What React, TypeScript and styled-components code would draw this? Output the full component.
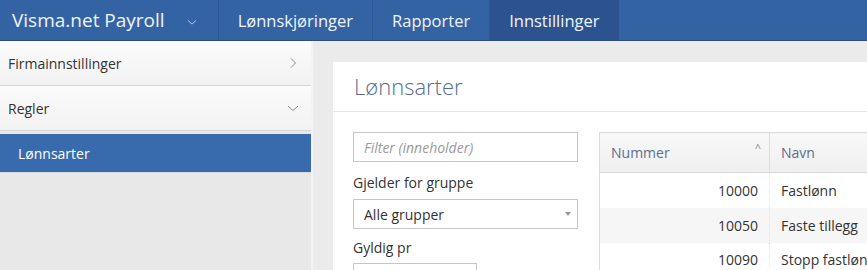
import React from 'react';
import styled, { createGlobalStyle } from 'styled-components';

const GlobalStyle = createGlobalStyle`
  html, body {
    margin: 0;
    padding: 0;
    overflow: hidden;
    background: #ebebeb;
    font-family: 'Open Sans', 'Noto Sans', Arial, sans-serif;
  }
  * { box-sizing: border-box; }
`;

const tabs = [
  { label: 'Lønnskjøringer' },
  { label: 'Rapporter' },
  { label: 'Innstillinger', active: true },
];

const rows = [
  { nr: '10000', name: 'Fastlønn' },
  { nr: '10050', name: 'Faste tillegg' },
  { nr: '10090', name: 'Stopp fastlønn' },
];

const Chevron: React.FC<{ dir: 'right' | 'down'; color?: string; size?: number }> = ({ dir, color = '#8a8a8a', size = 12 }) => (
  <svg width={size} height={size} viewBox="0 0 12 12" fill="none">
    {dir === 'right' ? (
      <path d="M4 1.5 L8.5 6 L4 10.5" stroke={color} strokeWidth="1" />
    ) : (
      <path d="M1 4 L6 8.5 L11 4" stroke={color} strokeWidth="1" />
    )}
  </svg>
);

const App: React.FC = () => {
  return (
    <>
      <GlobalStyle />
      <Page>
        <TopBar>
          <Brand>
            Visma.net Payroll
            <BrandCaret>
              <Chevron dir="down" color="#c9d8ee" size={10} />
            </BrandCaret>
          </Brand>
          {tabs.map((t) => (
            <Tab key={t.label} $active={t.active}>{t.label}</Tab>
          ))}
        </TopBar>
        <Body>
          <Sidebar>
            <SideItem>
              Firmainnstillinger
              <Chevron dir="right" />
            </SideItem>
            <SideItem>
              Regler
              <Chevron dir="down" />
            </SideItem>
            <SubItem $active>Lønnsarter</SubItem>
          </Sidebar>
          <Main>
            <Card>
              <CardTitle>Lønnsarter</CardTitle>
              <CardBody>
                <FilterColumn>
                  <TextInput placeholder="Filter (inneholder)" />
                  <Label>Gjelder for gruppe</Label>
                  <Select>
                    Alle grupper
                    <SelectCaret />
                  </Select>
                  <Label $tight>Gyldig pr</Label>
                  <DateInput />
                </FilterColumn>
                <Table>
                  <thead>
                    <tr>
                      <Th $width={170}>
                        Nummer
                        <SortCaret>^</SortCaret>
                      </Th>
                      <Th>Navn</Th>
                    </tr>
                  </thead>
                  <tbody>
                    {rows.map((r, i) => (
                      <Tr key={r.nr} $striped={i % 2 === 1}>
                        <NumCell>{r.nr}</NumCell>
                        <Td>{r.name}</Td>
                      </Tr>
                    ))}
                  </tbody>
                </Table>
              </CardBody>
            </Card>
          </Main>
        </Body>
      </Page>
    </>
  );
};

const Page = styled.div`
  display: flex;
  flex-direction: column;
  height: 270px;
  width: 867px;
  overflow: hidden;
`;

const TopBar = styled.div`
  display: flex;
  height: 41px;
  flex-shrink: 0;
  background: #3463a4;
  border-bottom: 1px solid #284f86;
  color: #fff;
`;

const Brand = styled.div`
  display: flex;
  align-items: center;
  padding: 0 21px 0 12px;
  font-size: 19px;
  color: #eef3fa;
`;

const BrandCaret = styled.span`
  display: flex;
  margin-left: 22px;
  margin-top: 3px;
`;

const Tab = styled.div<{ $active?: boolean }>`
  display: flex;
  align-items: center;
  padding: 0 19px;
  font-size: 16.5px;
  color: #eef3fa;
  border-left: 1px solid #2d5895;
  background: ${(p) => (p.$active ? '#2c5390' : 'transparent')};
`;

const Body = styled.div`
  display: flex;
  flex: 1;
  min-height: 0;
`;

const Sidebar = styled.div`
  width: 313px;
  flex-shrink: 0;
  background: #e8e8e8;
  border-right: 2px solid #f3f3f3;
  display: flex;
  flex-direction: column;
`;

const SideItem = styled.div`
  display: flex;
  align-items: center;
  justify-content: space-between;
  height: 45px;
  flex-shrink: 0;
  padding: 0 12px 0 8px;
  font-size: 14px;
  color: #333;
  background: linear-gradient(#fbfbfb, #f2f2f2);
  border-bottom: 1px solid #d6d6d6;
`;

const SubItem = styled.div<{ $active?: boolean }>`
  display: flex;
  align-items: center;
  height: 39px;
  flex-shrink: 0;
  margin-top: 3px;
  padding-left: 18px;
  font-size: 14px;
  color: ${(p) => (p.$active ? '#fff' : '#333')};
  background: ${(p) => (p.$active ? '#386bae' : 'transparent')};
  border-bottom: 1px solid #d9d9d9;
`;

const Main = styled.div`
  flex: 1;
  display: flex;
  padding: 21px 0 0 20px;
  min-width: 0;
`;

const Card = styled.div`
  flex: 1;
  background: #fff;
  display: flex;
  flex-direction: column;
  min-width: 0;
`;

const CardTitle = styled.div`
  height: 50px;
  flex-shrink: 0;
  display: flex;
  align-items: center;
  padding: 0 21px 2px;
  font-size: 22px;
  font-weight: 300;
  color: #566e8e;
  border-bottom: 1px solid #e4e4e4;
`;

const CardBody = styled.div`
  display: flex;
  gap: 21px;
  padding: 20px 0 0 20px;
  align-items: flex-start;
  flex-shrink: 0;
`;

const FilterColumn = styled.div`
  width: 225px;
  flex-shrink: 0;
  display: flex;
  flex-direction: column;
`;

const TextInput = styled.input`
  height: 30px;
  width: 225px;
  border: 1px solid #c6c6c6;
  padding: 0 10px;
  font-family: inherit;
  font-size: 14px;
  outline: none;
  &::placeholder {
    color: #9a9a9a;
    font-style: italic;
  }
`;

const Label = styled.div<{ $tight?: boolean }>`
  font-size: 14px;
  color: #333;
  margin: ${(p) => (p.$tight ? '9px 0 5px' : '11px 0 6px')};
  line-height: 20px;
`;

const Select = styled.div`
  position: relative;
  height: 30px;
  border: 1px solid #c6c6c6;
  display: flex;
  align-items: center;
  padding: 0 10px;
  font-size: 14px;
  color: #333;
`;

const SelectCaret = styled.span`
  position: absolute;
  right: 6px;
  top: 12px;
  width: 0;
  height: 0;
  border-left: 3.5px solid transparent;
  border-right: 3.5px solid transparent;
  border-top: 4px solid #999;
`;

const DateInput = styled.div`
  height: 30px;
  width: 124px;
  border: 1px solid #c6c6c6;
`;

const Table = styled.table`
  width: 600px;
  flex-shrink: 0;
  border-collapse: collapse;
  border: 1px solid #dcdcdc;
  font-size: 14px;
`;

const Th = styled.th<{ $width?: number }>`
  position: relative;
  width: ${(p) => (p.$width ? `${p.$width}px` : 'auto')};
  height: 40px;
  padding: 0 11px;
  text-align: left;
  font-weight: 400;
  color: #5b6f8e;
  background: linear-gradient(#f8f8f8, #efefef);
  border-bottom: 1px solid #d8d8d8;
  border-right: 1px solid #dcdcdc;
`;

const SortCaret = styled.span`
  position: absolute;
  right: 8px;
  top: 7px;
  font-size: 11px;
  color: #888;
`;

const Tr = styled.tr<{ $striped?: boolean }>`
  height: 35px;
  background: ${(p) => (p.$striped ? '#f6f6f6' : '#fff')};
`;

const Td = styled.td`
  padding: 0 11px;
  color: #333;
`;

const NumCell = styled(Td)`
  text-align: right;
  border-right: 1px dotted #e2e2e2;
`;

export default App;
